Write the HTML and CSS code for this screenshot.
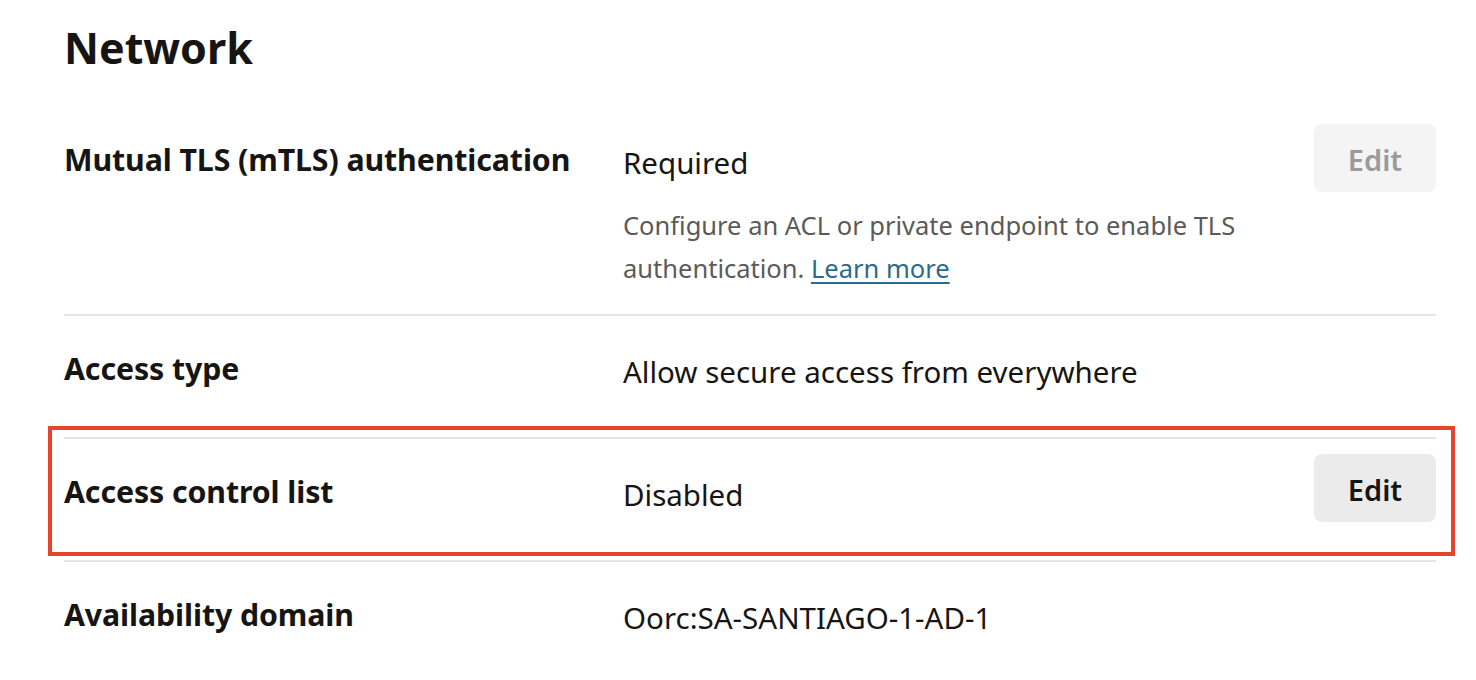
FILE: index.html
```html
<!DOCTYPE html>
<html lang="en">
<head>
<meta charset="utf-8">
<title>Network</title>
<link rel="stylesheet" href="styles.css">
</head>
<body>
<main class="page">
  <h1 class="title">Network</h1>
  <section class="list">
    <div class="row">
      <div class="label">Mutual TLS (mTLS) authentication</div>
      <div class="value">
        <div>Required</div>
        <p class="help">Configure an ACL or private endpoint to enable TLS authentication. <a href="#" class="link">Learn more</a></p>
      </div>
      <div class="action"><button class="btn btn-disabled" type="button">Edit</button></div>
    </div>
    <div class="row">
      <div class="label">Access type</div>
      <div class="value">Allow secure access from everywhere</div>
      <div class="action"></div>
    </div>
    <div class="row row-highlight">
      <div class="label">Access control list</div>
      <div class="value">Disabled</div>
      <div class="action"><button class="btn" type="button">Edit</button></div>
    </div>
    <div class="row">
      <div class="label">Availability domain</div>
      <div class="value">Oorc:SA-SANTIAGO-1-AD-1</div>
      <div class="action"></div>
    </div>
  </section>
</main>
</body>
</html>
```
FILE: styles.css
```css
* { box-sizing: border-box; }
html, body { margin: 0; padding: 0; background: #ffffff; }
body {
  font-family: "Noto Sans", "Open Sans", "Liberation Sans", sans-serif;
  color: #161513;
}
.page {
  padding: 0 40px 0 64px;
}
.title {
  margin: 0;
  padding-top: 20px;
  height: 109px;
  font-size: 43px;
  line-height: 56px;
  font-weight: 700;
  color: #161513;
}
.row {
  position: relative;
  display: grid;
  grid-template-columns: 559px 1fr auto;
  align-items: start;
  min-height: 123px;
  padding: 17px 0 24px;
  border-top: 2px solid #e5e5e5;
}
.row:first-child {
  border-top: 0;
  min-height: 0;
  padding-top: 15px;
  padding-bottom: 24px;
}
.label {
  padding-top: 18px;
  font-size: 30.3px;
  line-height: 36px;
  font-weight: 700;
  letter-spacing: -0.1px;
}
.value {
  padding-top: 17px;
  font-size: 29.5px;
  line-height: 43px;
  font-weight: 400;
}
.help {
  margin: 20px 0 0;
  font-size: 25.5px;
  line-height: 43px;
  color: #5b5a58;
  max-width: 660px;
}
.link {
  color: #2c6a8a;
  text-decoration: underline;
  text-underline-offset: 4px;
  text-decoration-thickness: 2px;
}
.action { display: flex; justify-content: flex-end; }
.btn {
  width: 122px;
  height: 68px;
  margin-top: -2px;
  border: 0;
  border-radius: 8px;
  background: #ebebeb;
  color: #161513;
  font-family: inherit;
  font-size: 29px;
  font-weight: 600;
  padding: 2px 0 0;
}
.row:first-child .btn { margin-top: 0; }
.btn-disabled {
  background: #f4f4f4;
  color: #9a9a9a;
}
.row-highlight::after {
  content: "";
  position: absolute;
  top: -13px;
  left: -16px;
  right: -19px;
  bottom: 4px;
  border: 4px solid #e8432b;
  pointer-events: none;
}
```
